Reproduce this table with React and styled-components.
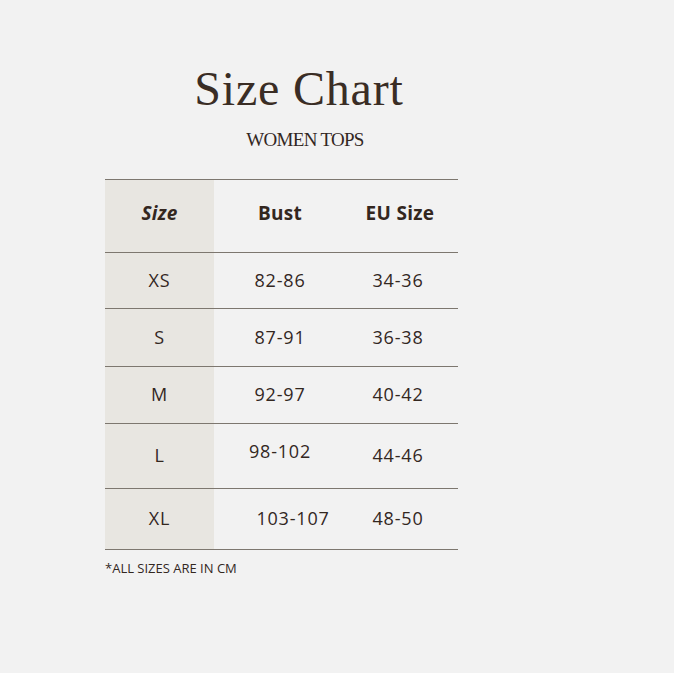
import styled, { createGlobalStyle } from 'styled-components';

const GlobalStyle = createGlobalStyle`
    html, body {
        margin: 0;
        padding: 0;
        background: #f2f2f2;
    }
`;

const Page = styled.div`
    width: 674px;
    height: 673px;
    background: #f2f2f2;
    padding: 61px 0 0 105px;
    box-sizing: border-box;
    color: #33271f;
`;

const Header = styled.div`
    width: 394px;
    display: flex;
    flex-direction: column;
    align-items: center;
`;

const Title = styled.h1`
    margin: 0 6px 0 0;
    font-family: "Liberation Serif", serif;
    font-weight: 400;
    font-size: 48px;
    line-height: 56px;
    letter-spacing: 0.8px;
    color: #3a2d25;
`;

const SubTitle = styled.div`
    margin-top: 12px;
    margin-left: 6px;
    font-family: "Liberation Serif", serif;
    font-size: 19px;
    line-height: 22px;
    letter-spacing: -0.7px;
`;

const Table = styled.div`
    margin-top: 28px;
    width: 353px;
    border-top: 1.5px solid #7d776f;
    font-family: "Open Sans", sans-serif;
`;

const Row = styled.div`
    display: grid;
    grid-template-columns: 109px 132px 112px;
    height: ${(p) => p.h}px;
    border-bottom: 1.5px solid #7d776f;
    box-sizing: border-box;
`;

const Cell = styled.div`
    display: flex;
    align-items: center;
    justify-content: center;
    background: ${(p) => (p.shade ? '#e8e6e1' : 'transparent')};
    font-size: ${(p) => (p.head ? '19px' : '18px')};
    font-weight: ${(p) => (p.head ? 700 : 400)};
    font-style: ${(p) => (p.italic ? 'italic' : 'normal')};
    letter-spacing: ${(p) => (p.head ? '0.3px' : '0.8px')};
    padding-right: ${(p) => p.pr || 0}px;
    padding-left: ${(p) => p.pl || 0}px;
    padding-bottom: ${(p) => (p.pb || 0) + (p.head ? 6 : 2)}px;
`;

const Note = styled.div`
    margin-top: 9px;
    font-family: "Open Sans", sans-serif;
    font-size: 13px;
    color: #33271f;
`;

const rows = [
    { size: 'XS', bust: '82-86', eu: '34-36', h: 56 },
    { size: 'S', bust: '87-91', eu: '36-38', h: 58 },
    { size: 'M', bust: '92-97', eu: '40-42', h: 57 },
    { size: 'L', bust: '98-102', eu: '44-46', h: 65, lift: 8 },
    { size: 'XL', bust: '103-107', eu: '48-50', h: 61, shift: 26 },
];

const App = () => {
    return (
        <>
            <GlobalStyle />
            <Page>
                <Header>
                    <Title>Size Chart</Title>
                    <SubTitle>WOMEN TOPS</SubTitle>
                </Header>
                <Table>
                    <Row h={73}>
                        <Cell shade head italic>Size</Cell>
                        <Cell head>Bust</Cell>
                        <Cell head pr={4}>EU Size</Cell>
                    </Row>
                    {rows.map((r) => (
                        <Row key={r.size} h={r.h}>
                            <Cell shade>{r.size}</Cell>
                            <Cell pb={r.lift} pl={r.shift}>{r.bust}</Cell>
                            <Cell pr={8}>{r.eu}</Cell>
                        </Row>
                    ))}
                </Table>
                <Note>*ALL SIZES ARE IN CM</Note>
            </Page>
        </>
    );
};

export default App;
